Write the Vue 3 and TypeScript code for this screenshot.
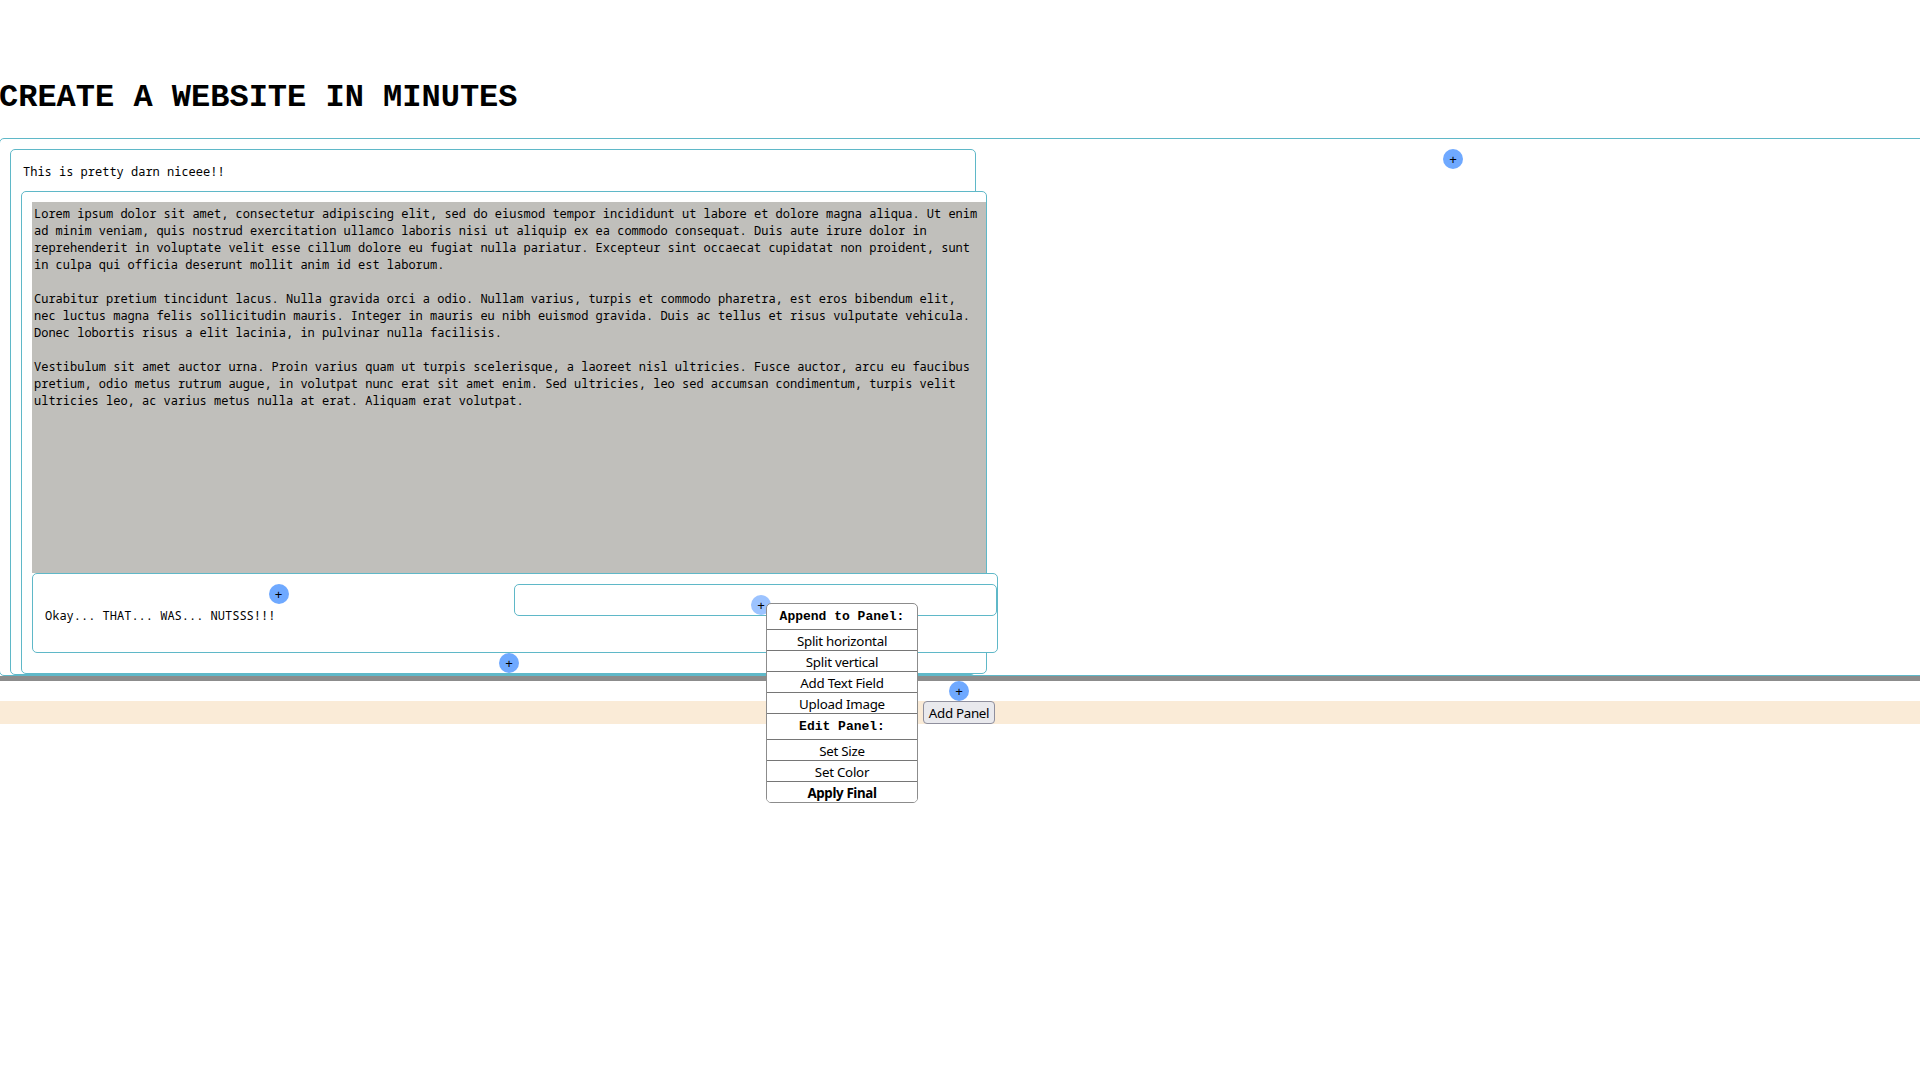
<script setup lang="ts">
const title = 'CREATE A WEBSITE IN MINUTES'

const intro = 'This is pretty darn niceee!!'
const outro = 'Okay... THAT... WAS... NUTSSS!!!'

const paragraphs: string[][] = [
  [
    'Lorem ipsum dolor sit amet, consectetur adipiscing elit, sed do eiusmod tempor incididunt ut labore et dolore magna aliqua. Ut enim',
    'ad minim veniam, quis nostrud exercitation ullamco laboris nisi ut aliquip ex ea commodo consequat. Duis aute irure dolor in',
    'reprehenderit in voluptate velit esse cillum dolore eu fugiat nulla pariatur. Excepteur sint occaecat cupidatat non proident, sunt',
    'in culpa qui officia deserunt mollit anim id est laborum.',
  ],
  [
    'Curabitur pretium tincidunt lacus. Nulla gravida orci a odio. Nullam varius, turpis et commodo pharetra, est eros bibendum elit,',
    'nec luctus magna felis sollicitudin mauris. Integer in mauris eu nibh euismod gravida. Duis ac tellus et risus vulputate vehicula.',
    'Donec lobortis risus a elit lacinia, in pulvinar nulla facilisis.',
  ],
  [
    'Vestibulum sit amet auctor urna. Proin varius quam ut turpis scelerisque, a laoreet nisl ultricies. Fusce auctor, arcu eu faucibus',
    'pretium, odio metus rutrum augue, in volutpat nunc erat sit amet enim. Sed ultricies, leo sed accumsan condimentum, turpis velit',
    'ultricies leo, ac varius metus nulla at erat. Aliquam erat volutpat.',
  ],
]

interface MenuGroup {
  heading: string
  items: { label: string; strong?: boolean }[]
}

const menu: MenuGroup[] = [
  {
    heading: 'Append to Panel:',
    items: [
      { label: 'Split horizontal' },
      { label: 'Split vertical' },
      { label: 'Add Text Field' },
      { label: 'Upload Image' },
    ],
  },
  {
    heading: 'Edit Panel:',
    items: [{ label: 'Set Size' }, { label: 'Set Color' }, { label: 'Apply Final', strong: true }],
  },
]
</script>

<template>
  <main class="page">
    <h1 class="title">{{ title }}</h1>

    <section class="panel root">
      <div class="panel column">
        <p class="note intro">{{ intro }}</p>
        <div class="panel story">
          <div class="lorem">
            <p v-for="(lines, i) in paragraphs" :key="i">
              <span v-for="line in lines" :key="line">{{ line }}</span>
            </p>
          </div>
          <div class="panel split">
            <div class="left">
              <button class="plus">+</button>
              <p class="note">{{ outro }}</p>
            </div>
            <div class="panel slot">
              <button class="plus active">+</button>
              <div class="menu">
                <template v-for="group in menu" :key="group.heading">
                  <h4>{{ group.heading }}</h4>
                  <button v-for="item in group.items" :key="item.label" :class="{ strong: item.strong }">
                    {{ item.label }}
                  </button>
                </template>
              </div>
            </div>
          </div>
          <button class="plus below">+</button>
        </div>
      </div>
      <div class="rest">
        <button class="plus">+</button>
      </div>
    </section>

    <div class="bar"></div>
    <div class="append"><button class="plus">+</button></div>
    <footer class="footer"><button class="add">Add Panel</button></footer>
  </main>
</template>

<style>
body {
  background: #fff;
}
</style>

<style scoped>
* {
  box-sizing: border-box;
}
.page {
  width: 1920px;
  height: 1080px;
  overflow: hidden;
  color: #000;
  font-family: 'Noto Sans', sans-serif;
}
button {
  margin: 0;
  padding: 0;
  border: 0;
  color: #000;
  font: 13.333px/18px 'Noto Sans', sans-serif;
}
.title {
  height: 138px;
  margin: 0 0 0 -1px;
  padding-top: 80px;
  font: bold 32px/36px 'Liberation Mono', monospace;
}
.panel {
  border: 1px solid #5fb8c8;
  border-radius: 5px;
  background: #fff;
}
.root {
  display: flex;
  width: 1942px;
  height: 538px;
  margin-left: -1px;
  padding: 10px 0 0 10px;
}
.column {
  flex: none;
  width: 966px;
  height: 526px;
  padding-left: 10px;
}
.note {
  margin: 0;
  padding-left: 2px;
  font: 12px/17px 'Noto Sans Mono', 'DejaVu Sans Mono', monospace;
  white-space: pre;
}
.intro {
  height: 41px;
  padding-top: 13px;
}
.story {
  width: 966px;
  height: 483px;
  padding: 10px 0 0 10px;
}
.lorem {
  height: 371px;
  padding: 3px 0 0 2px;
  background: #c0bfbb;
  font: 12px/17px 'Noto Sans Mono', 'DejaVu Sans Mono', monospace;
}
.lorem p {
  margin: 0 0 17px;
}
.lorem span {
  display: block;
  white-space: pre;
}
.split {
  display: flex;
  width: 966px;
  height: 80px;
  padding: 10px 0 0 10px;
}
.left {
  display: flex;
  flex-direction: column;
  align-items: center;
  gap: 3px;
  width: 471px;
}
.left .note {
  align-self: stretch;
}
.slot {
  position: relative;
  width: 483px;
  height: 32px;
  padding-top: 10px;
}
.plus {
  display: block;
  flex: none;
  width: 20px;
  height: 20px;
  margin: 0 auto;
  border-radius: 50%;
  background: #6fa9ff;
  line-height: 20px;
  text-align: center;
}
.active {
  margin-left: 236px;
  background: #9cc3ff;
}
.below {
  margin-left: 467px;
}
.menu {
  position: absolute;
  left: 251px;
  top: 18px;
  z-index: 2;
  width: 152px;
  height: 200px;
  overflow: hidden;
  border: 1px solid #8c8c8c;
  border-radius: 5px;
  background: #fff;
}
.menu h4 {
  height: 25px;
  margin: 0;
  font: bold 13px/25px 'Liberation Mono', monospace;
  text-align: center;
}
.menu button + h4 {
  height: 26px;
  border-top: 1px solid #767676;
}
.menu button {
  display: block;
  width: 100%;
  height: 21px;
  border-top: 1px solid #767676;
  background: #fff;
  letter-spacing: -0.25px;
  line-height: 22px;
}
.menu .strong {
  font-weight: bold;
  letter-spacing: -0.35px;
}
.rest {
  flex: none;
  width: 954px;
}
.bar {
  height: 5px;
  background: #8c8c8c;
}
.append {
  height: 20px;
  padding-right: 2px;
}
.footer {
  display: flex;
  justify-content: center;
  height: 23px;
  padding-right: 2px;
  background: #faebd7;
}
.add {
  width: 72px;
  border: 1px solid #8f8f9d;
  border-radius: 4px;
  background: #e9e9ed;
  letter-spacing: -0.3px;
  line-height: 22px;
}
</style>
